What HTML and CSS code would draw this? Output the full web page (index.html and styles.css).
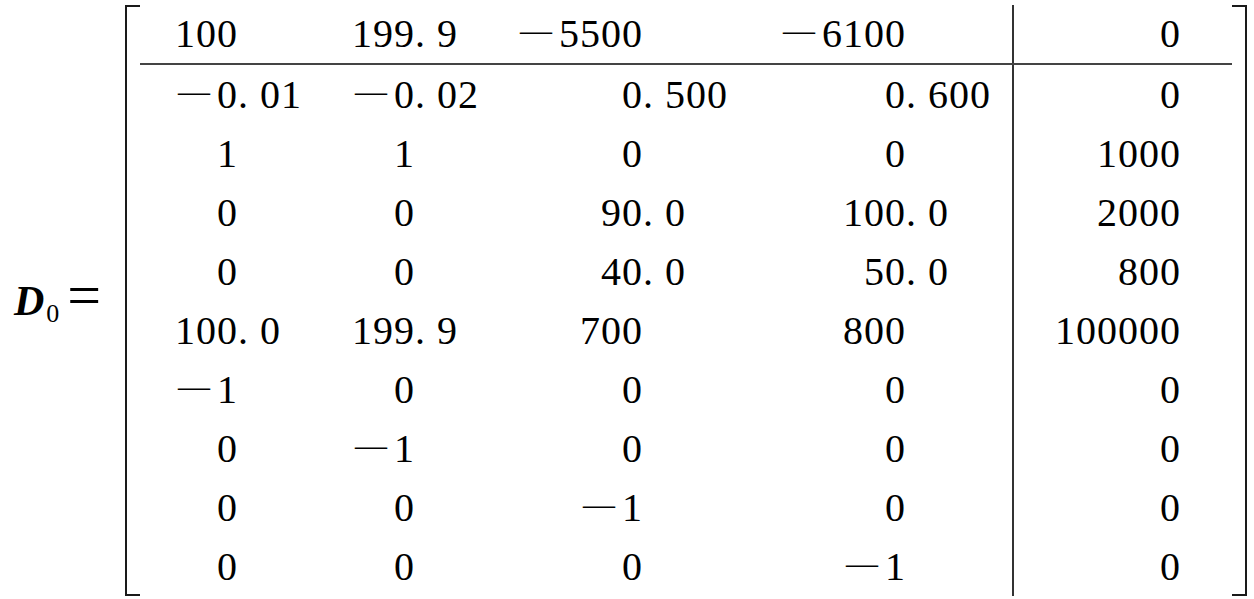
FILE: index.html
```html
<!DOCTYPE html>
<html lang="en">
<head>
  <meta charset="UTF-8">
  <meta name="viewport" content="width=device-width, initial-scale=1">
  <title>D0 matrix</title>
  <link rel="stylesheet" href="styles.css">
</head>
<body>

  <div class="equation">
    <div class="lhs"><span class="var">D</span><sub>0</sub><span class="eq-sign">=</span></div>

    <div class="matrix">
      <div class="bracket left"></div>

      <table class="cells">
        <colgroup>
          <col class="int1"><col class="frac1">
          <col class="int2"><col class="frac2">
          <col class="int3"><col class="frac3">
          <col class="int4"><col class="frac4">
          <col class="rhs"><col class="pad">
        </colgroup>
        <tr class="head">
          <td class="int">100</td><td class="frac"></td>
          <td class="int">199</td><td class="frac">. 9</td>
          <td class="int"><span class="neg">—</span>5500</td><td class="frac"></td>
          <td class="int"><span class="neg">—</span>6100</td><td class="frac"></td>
          <td class="last">0</td><td></td>
        </tr>
        <tr>
          <td class="int"><span class="neg">—</span>0</td><td class="frac">. 01</td>
          <td class="int"><span class="neg">—</span>0</td><td class="frac">. 02</td>
          <td class="int">0</td><td class="frac">. 500</td>
          <td class="int">0</td><td class="frac">. 600</td>
          <td class="last">0</td><td></td>
        </tr>
        <tr>
          <td class="int">1</td><td class="frac"></td>
          <td class="int">1</td><td class="frac"></td>
          <td class="int">0</td><td class="frac"></td>
          <td class="int">0</td><td class="frac"></td>
          <td class="last">1000</td><td></td>
        </tr>
        <tr>
          <td class="int">0</td><td class="frac"></td>
          <td class="int">0</td><td class="frac"></td>
          <td class="int">90</td><td class="frac">. 0</td>
          <td class="int">100</td><td class="frac">. 0</td>
          <td class="last">2000</td><td></td>
        </tr>
        <tr>
          <td class="int">0</td><td class="frac"></td>
          <td class="int">0</td><td class="frac"></td>
          <td class="int">40</td><td class="frac">. 0</td>
          <td class="int">50</td><td class="frac">. 0</td>
          <td class="last">800</td><td></td>
        </tr>
        <tr>
          <td class="int">100</td><td class="frac">. 0</td>
          <td class="int">199</td><td class="frac">. 9</td>
          <td class="int">700</td><td class="frac"></td>
          <td class="int">800</td><td class="frac"></td>
          <td class="last">100000</td><td></td>
        </tr>
        <tr>
          <td class="int"><span class="neg">—</span>1</td><td class="frac"></td>
          <td class="int">0</td><td class="frac"></td>
          <td class="int">0</td><td class="frac"></td>
          <td class="int">0</td><td class="frac"></td>
          <td class="last">0</td><td></td>
        </tr>
        <tr>
          <td class="int">0</td><td class="frac"></td>
          <td class="int"><span class="neg">—</span>1</td><td class="frac"></td>
          <td class="int">0</td><td class="frac"></td>
          <td class="int">0</td><td class="frac"></td>
          <td class="last">0</td><td></td>
        </tr>
        <tr>
          <td class="int">0</td><td class="frac"></td>
          <td class="int">0</td><td class="frac"></td>
          <td class="int"><span class="neg">—</span>1</td><td class="frac"></td>
          <td class="int">0</td><td class="frac"></td>
          <td class="last">0</td><td></td>
        </tr>
        <tr>
          <td class="int">0</td><td class="frac"></td>
          <td class="int">0</td><td class="frac"></td>
          <td class="int">0</td><td class="frac"></td>
          <td class="int"><span class="neg">—</span>1</td><td class="frac"></td>
          <td class="last">0</td><td></td>
        </tr>
      </table>

      <div class="bracket right"></div>
    </div>
  </div>

</body>
</html>
```

FILE: styles.css
```css
body {
  margin: 0;
  background: #fff;
  color: #000;
  font-family: "Liberation Serif", "Times New Roman", serif;
}

.equation {
  display: flex;
  align-items: center;
  padding: 5px 0 0 14px;
}

/* left hand side: D0 = */
.lhs {
  width: 111px;
  font-size: 42px;
  line-height: 42px;
  white-space: nowrap;
}

.lhs .var {
  font-weight: bold;
  font-style: italic;
}

.lhs sub {
  font-size: 26px;
  line-height: 0;
  vertical-align: -7px;
  margin-left: 2px;
}

.lhs .eq-sign {
  font-size: 60px;
  line-height: 0;
  margin-left: 8px;
}

/* the bracketed matrix */
.matrix {
  display: flex;
}

.bracket {
  width: 15px;
  box-sizing: border-box;
  border: 2px solid #1a1a1a;
}

.bracket.left {
  border-right: none;
}

.bracket.right {
  border-left: none;
}

.cells {
  border-collapse: collapse;
  table-layout: fixed;
  width: 1092px;
  font-size: 40px;
  letter-spacing: 1px;
}

.cells col.int1 { width: 98px; }
.cells col.frac1 { width: 70px; }
.cells col.int2 { width: 107px; }
.cells col.frac2 { width: 70px; }
.cells col.int3 { width: 158px; }
.cells col.frac3 { width: 100px; }
.cells col.int4 { width: 163px; }
.cells col.frac4 { width: 107px; }
.cells col.rhs { width: 168px; }
.cells col.pad { width: 51px; }

.cells td {
  padding: 0;
  height: 59px;
  line-height: 59px;
  white-space: nowrap;
}

.cells tr.head td {
  height: 58px;
  line-height: 58px;
  border-bottom: 2px solid #444;
}

.cells td.int {
  text-align: right;
}

.cells td.frac {
  text-align: left;
}

.cells td.last {
  text-align: right;
  border-left: 2px solid #333;
}

/* long minus sign, raised to the middle of the digits */
.neg {
  font-size: 32px;
  line-height: 1;
  letter-spacing: 0;
  vertical-align: 6px;
  margin-right: 7px;
}
```
